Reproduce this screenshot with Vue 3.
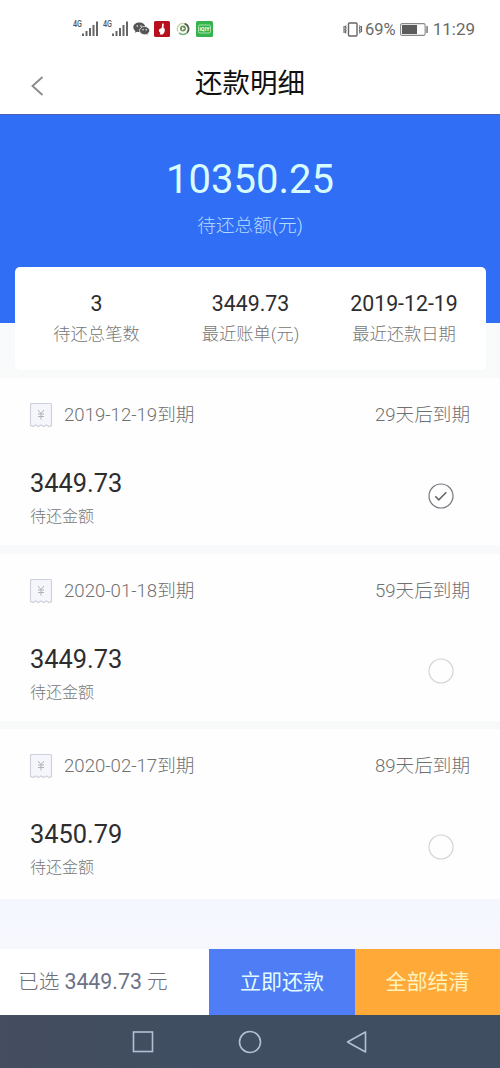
<script setup>
const summary = [
  { value: '3', label: '待还总笔数' },
  { value: '3449.73', label: '最近账单(元)' },
  { value: '2019-12-19', label: '最近还款日期' },
]
const bills = [
  { date: '2019-12-19到期', due: '29天后到期', amount: '3449.73', checked: true },
  { date: '2020-01-18到期', due: '59天后到期', amount: '3449.73', checked: false },
  { date: '2020-02-17到期', due: '89天后到期', amount: '3450.79', checked: false },
]
</script>

<template>
  <div class="screen">
    <div class="status">
      <div class="status-left">
        <svg v-for="n in 2" :key="n" class="signal" width="27" height="20" viewBox="0 0 27 20">
          <text x="0" y="8" class="net" textLength="9" lengthAdjust="spacingAndGlyphs">4G</text>
          <g fill="#666">
            <rect x="9" y="14.500" width="2" height="2.500" />
            <rect x="12.500" y="12" width="2" height="5" />
            <rect x="16" y="9" width="2" height="8" />
            <rect x="19.500" y="6" width="2" height="11" />
            <rect x="23" y="2.500" width="2" height="14.500" />
          </g>
        </svg>
        <svg class="wechat" width="17" height="14" viewBox="0 0 17 14">
          <path d="M6.300 0.500C2.900 0.500 0.300 2.600 0.300 5.300c0 1.500 0.800 2.800 2.100 3.700L1.900 10.800l2.200-1.100c0.700 0.200 1.400 0.300 2.200 0.300 3.400 0 6-2.100 6-4.800S9.700 0.500 6.300 0.500z" fill="#555" />
          <path d="M11.500 4.500c-2.800 0-5 1.800-5 4.100s2.200 4.100 5 4.100c0.600 0 1.200-0.100 1.700-0.300l2 1-0.500-1.600c1.200-0.700 1.900-1.900 1.900-3.200 0-2.300-2.300-4.100-5.100-4.100z" fill="#555" stroke="#fff" stroke-width="0.700" />
          <g fill="#fff">
            <circle cx="4.300" cy="4" r="0.800" /><circle cx="8" cy="4" r="0.800" />
            <circle cx="10" cy="7.800" r="0.700" /><circle cx="13.200" cy="7.800" r="0.700" />
          </g>
        </svg>
        <svg class="red" width="16" height="16" viewBox="0 0 16 16">
          <rect width="16" height="16" rx="1.500" fill="#b8101f" />
          <path d="M8.200 2.600c0.900-0.500 1.700 0 1.600 1L9.500 6.500c1.100 0.800 1.500 2 1.300 3.300-0.200 1.600-1 2.700-2.200 3.600H5.800l0.500-1.700C4.900 11 4.500 9.500 5.200 8.200L7.700 7z" fill="#fff" />
        </svg>
        <svg class="swirl" width="14" height="14" viewBox="0 0 14 14" fill="none">
          <path d="M2 9.500A5.500 5.500 0 0 1 8.500 1.700" stroke="#c9d5a0" stroke-width="1.400" />
          <path d="M8.500 1.700A5.500 5.500 0 0 1 11 10.800" stroke="#52634f" stroke-width="1.800" />
          <path d="M11 10.800A5.500 5.500 0 0 1 3 10.800" stroke="#75ad70" stroke-width="1.500" />
          <circle cx="7" cy="6.600" r="3" fill="#6f9458" />
          <path d="M6 5l2.800 1.600L6 8.200z" fill="#fff" />
        </svg>
        <svg class="green" width="17" height="16" viewBox="0 0 17 16">
          <rect width="17" height="16" rx="1.500" fill="#35b44c" />
          <rect x="2.500" y="4" width="12" height="8" rx="1.500" fill="none" stroke="#b5e8bc" stroke-width="0.900" />
          <text x="8.500" y="10.300" class="badge-text" text-anchor="middle">iQIY</text>
        </svg>
      </div>
      <div class="status-right">
        <svg width="21" height="15" viewBox="0 0 21 15" fill="none" stroke="#666">
          <rect x="6.500" y="1" width="8.500" height="13" rx="1" stroke-width="1.400" />
          <path d="M4.200 3.500l-1 1.300 1 1.300-1 1.300 1 1.300-1 1.300 1 1.300M2 4v7M17.300 3.500l1 1.300-1 1.300 1 1.300-1 1.300 1 1.300-1 1.300M19.500 4v6" stroke-width="1.100" />
        </svg>
        <span class="pct">69%</span>
        <svg width="29" height="13" viewBox="0 0 29 13">
          <rect x="0.600" y="0.600" width="24.500" height="11.800" rx="1.500" fill="none" stroke="#888" stroke-width="1.100" />
          <rect x="2" y="2" width="15" height="9" fill="#5b5b5b" />
          <rect x="26.300" y="3" width="1.500" height="7" fill="#777" />
        </svg>
        <span class="time">11:29</span>
      </div>
    </div>

    <header class="header">
      <svg class="back" width="14" height="22" viewBox="0 0 14 22" fill="none">
        <path d="M12.500 2L2.500 11l10 9" stroke="#8c8c8c" stroke-width="1.900" />
      </svg>
      <h1>还款明细</h1>
    </header>

    <section class="hero">
      <div class="total">10350.25</div>
      <div class="total-label">待还总额(元)</div>
    </section>

    <section class="summary">
      <div v-for="s in summary" :key="s.label" class="cell">
        <div class="cell-value">{{ s.value }}</div>
        <div class="cell-label">{{ s.label }}</div>
      </div>
    </section>

    <main class="bills">
      <article v-for="b in bills" :key="b.date" class="bill">
        <div class="bill-head">
          <svg width="24" height="26" viewBox="0 0 24 26" fill="none">
            <path d="M2.500 1.500h19q1 0 1 1v21l-2.500 1-2.500-1.500-2.800 1.500-2.700-1.500-2.700 1.500L6.500 23 4 24.500l-2.500-1v-21q0-1 1-1z" fill="#f5f6fb" stroke="#cfd1db" stroke-width="1.200" />
            <path d="M9 8l3 3.500 3-3.500M9 12h6M9 14.500h6M12 11.500v6" stroke="#a9abb8" stroke-width="0.900" />
          </svg>
          <span class="date">{{ b.date }}</span>
          <span class="due">{{ b.due }}</span>
        </div>
        <div class="bill-body">
          <div>
            <div class="amount">{{ b.amount }}</div>
            <div class="amount-label">待还金额</div>
          </div>
          <svg width="26" height="26" viewBox="0 0 26 26" fill="none">
            <circle cx="13" cy="13" r="12" :stroke="b.checked ? '#777980' : '#d3d3d5'" stroke-width="1.200" />
            <path v-if="b.checked" d="M7.300 13.300l3.500 3.500 7.500-7.500" stroke="#666" stroke-width="1.600" />
          </svg>
        </div>
      </article>
    </main>

    <footer class="bar">
      <div class="chosen">已选 <b>3449.73</b> 元</div>
      <div class="btn pay">立即还款</div>
      <div class="btn settle">全部结清</div>
    </footer>

    <nav class="nav">
      <svg width="24" height="24" viewBox="0 0 24 24"><rect x="2.500" y="2" width="19" height="19.500" /></svg>
      <svg width="24" height="24" viewBox="0 0 24 24"><circle cx="12" cy="12" r="10.500" /></svg>
      <svg width="24" height="24" viewBox="0 0 24 24"><path d="M20.500 2v20L2.500 12z" stroke-linejoin="round" /></svg>
    </nav>
  </div>
</template>

<style>
body {
  margin: 0;
}
</style>

<style scoped>
.screen {
  width: 500px;
  height: 1068px;
  overflow: hidden;
  display: flex;
  flex-direction: column;
  background: linear-gradient(#f9fafb 0, #f8f9f9 740px, #f4f7fe 900px, #f7f8fe 948px);
  font-family: Roboto, "Noto Sans CJK SC", sans-serif;
  color: #2d2d30;
}
svg {
  display: block;
  flex: none;
}
.status {
  height: 58px;
  box-sizing: border-box;
  padding: 0 25px 0 73px;
  display: flex;
  justify-content: space-between;
  align-items: center;
  background: #fff;
}
.status-left,
.status-right {
  display: flex;
  align-items: center;
}
.signal {
  margin-right: 3px;
}
.net {
  font-size: 9px;
  font-weight: 500;
  fill: #555;
}
.badge-text {
  font-size: 5.5px;
  font-weight: 700;
  fill: #fff;
}
.red {
  margin-left: 4px;
}
.swirl {
  margin-left: 6px;
}
.green {
  margin-left: 6px;
}
.status-right {
  font-size: 17px;
  line-height: 20px;
  color: #6a6a6a;
}
.pct {
  margin: 1px 4px 0 2px;
  font-size: 16.5px;
}
.time {
  margin: 0 0 0 4px;
}
.header {
  height: 56px;
  box-sizing: border-box;
  padding: 0 30px 4px;
  display: grid;
  grid-template-columns: 14px 1fr 14px;
  align-items: center;
  background: #fff;
}
.back {
  margin-top: 3px;
}
h1 {
  margin: 0;
  text-align: center;
  font-size: 27.5px;
  line-height: 40px;
  font-weight: 400;
  color: #111;
}
.hero {
  height: 209px;
  flex: none;
  box-sizing: border-box;
  padding-top: 42px;
  border-top: 1px solid #4a63b8;
  background: #306ef5;
  text-align: center;
}
.total {
  font-size: 40px;
  line-height: 46px;
  color: #d8fbff;
}
.total-label {
  margin-top: 10px;
  font-size: 18.7px;
  line-height: 26px;
  font-weight: 300;
  color: #b4dcff;
}
.summary {
  height: 103px;
  flex: none;
  box-sizing: border-box;
  margin: -56px 14px 0 15px;
  padding: 23px 5px 0 5px;
  display: grid;
  grid-template-columns: 153px 155px 152px;
  border-radius: 5px;
  background: #fff;
  text-align: center;
}
.cell-value {
  font-size: 21.3px;
  line-height: 28px;
}
.cell-label {
  margin-top: 4px;
  font-size: 17.3px;
  line-height: 24px;
  font-weight: 300;
  color: #777;
}
.bills {
  margin-top: 8px;
  display: flex;
  flex-direction: column;
  gap: 8.5px;
}
.bill {
  height: 167px;
  box-sizing: border-box;
  padding: 22px 30px 0 29px;
  background: #fefefe;
}
.bill:last-child {
  height: 170px;
}
.bill-head {
  display: flex;
  align-items: center;
  height: 30px;
  font-size: 18.6px;
  line-height: 26px;
  font-weight: 300;
  color: #707070;
}
.date {
  margin: 0 0 0 11px;
}
.due {
  margin: 0 0 0 auto;
}
.bill-body {
  margin-top: 37px;
  padding: 0 16px 0 1px;
  display: flex;
  align-items: center;
  justify-content: space-between;
}
.bill-body svg {
  margin-top: -4px;
}
.amount {
  font-size: 25.4px;
  line-height: 32px;
}
.amount-label {
  margin-top: 7px;
  font-size: 16px;
  line-height: 22px;
  font-weight: 300;
  color: #777;
}
.bar {
  height: 66px;
  flex: none;
  margin-top: auto;
  display: grid;
  grid-template-columns: 209px 146px 1fr;
  line-height: 66px;
  background: #fff;
}
.chosen {
  padding-left: 18px;
  font-size: 20.7px;
  font-weight: 300;
  color: #6d6e76;
  white-space: nowrap;
}
.chosen b {
  font-size: 21.3px;
  font-weight: 400;
  color: #6c7288;
}
.btn {
  text-align: center;
  font-size: 21px;
}
.pay {
  background: #4f7df5;
  color: #e3fcff;
}
.settle {
  background: #ffa938;
  color: #fff3bd;
}
.nav {
  height: 53px;
  flex: none;
  display: flex;
  justify-content: center;
  align-items: center;
  gap: 83px;
  background: linear-gradient(90deg, #454d60, #3f4f61 40%);
}
.nav svg {
  fill: none;
  stroke: #b3bfd4;
  stroke-width: 1.6;
}
</style>
